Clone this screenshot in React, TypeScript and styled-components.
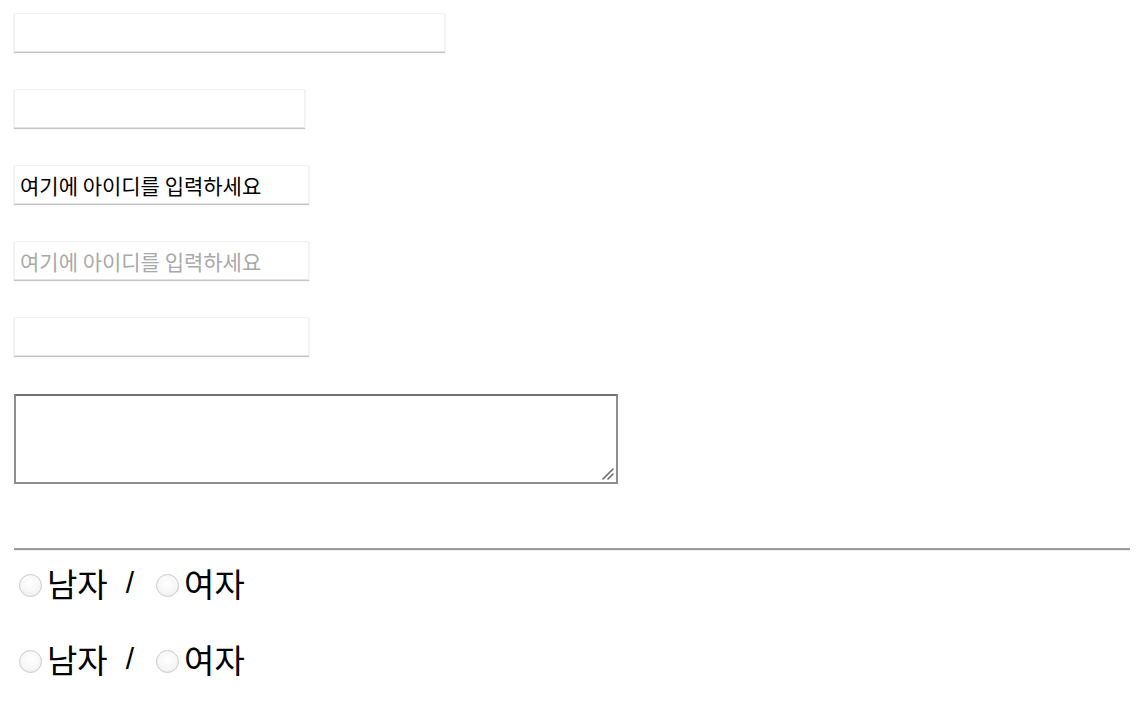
import styled, { createGlobalStyle } from 'styled-components';

const GlobalStyle = createGlobalStyle`
  body {
    margin: 0;
    background: #ffffff;
    font-family: "Liberation Serif", "Noto Sans CJK KR", serif;
  }
`;

function App() {
  return (
    <>
      <GlobalStyle />
      <Page>
        <TextField type='text' width={431} gapAfter={37} />
        <TextField type='password' width={291} gapAfter={37} />
        <TextField type='text' width={295} gapAfter={37} defaultValue='여기에 아이디를 입력하세요' />
        <TextField type='text' width={295} gapAfter={37} placeholder='여기에 아이디를 입력하세요' />
        <TextField type='email' width={295} gapAfter={38} />
        <MemoWrap>
          <Memo />
          <Grip width='12' height='12' viewBox='0 0 12 12'>
            <path d='M1 11 L11 1 M6 11 L11 6' stroke='#6b6b6b' strokeWidth='1.6' strokeLinecap='round' />
          </Grip>
        </MemoWrap>
        <Divider />
        <GenderRow>
          <Radio type='radio' name='gender1' />
          <Label>남자</Label>
          <Slash>/</Slash>
          <Radio type='radio' name='gender1' />
          <Label>여자</Label>
        </GenderRow>
        <GenderRow>
          <Radio type='radio' name='gender2' />
          <Label>남자</Label>
          <Slash>/</Slash>
          <Radio type='radio' name='gender2' />
          <Label>여자</Label>
        </GenderRow>
      </Page>
    </>
  );
}

const Page = styled.div`
  display: flex;
  flex-direction: column;
  align-items: flex-start;
  padding: 13px 10px 20px 14px;
`;

const TextField = styled.input<{ width: number; gapAfter: number }>`
  box-sizing: border-box;
  width: ${(p) => p.width}px;
  height: 39px;
  margin: 0 0 ${(p) => p.gapAfter}px;
  padding: 0 5px;
  border: 1px solid #f1f1f1;
  border-bottom-color: #e2e2e2;
  box-shadow: 0 1px 1px rgba(0, 0, 0, 0.22);
  background: #ffffff;
  outline: none;
  font-family: "Noto Sans CJK KR", "Noto Sans", sans-serif;
  font-size: 21px;
  font-weight: 400;
  color: #000000;

  &::placeholder {
    color: #a9a9a9;
  }
`;

const MemoWrap = styled.div`
  position: relative;
  display: flex;
`;

const Memo = styled.textarea`
  box-sizing: border-box;
  width: 604px;
  height: 90px;
  margin: 0;
  padding: 2px;
  border: 2px solid #8f8f8f;
  border-top-color: #717171;
  background: #ffffff;
  outline: none;
  resize: none;
`;

const Grip = styled.svg`
  position: absolute;
  right: 4px;
  bottom: 4px;
  pointer-events: none;
`;

const Divider = styled.hr`
  align-self: stretch;
  margin: 64px 0 0;
  height: 0;
  border: none;
  border-top: 2px solid #9b9b9b;
  border-bottom: 1px solid #efefef;
`;

const GenderRow = styled.div`
  display: flex;
  align-items: center;
  height: 40px;
  margin-top: 12px;
  & + & {
    margin-top: 36px;
  }
`;

const Radio = styled.input`
  appearance: none;
  box-sizing: border-box;
  width: 23px;
  height: 23px;
  margin: 5px 5px 0 5px;
  border: 1px solid #cbcbcb;
  border-radius: 50%;
  background: radial-gradient(circle at 50% 40%, #ffffff 0%, #f7f7f7 55%, #e6e6e6 100%);
`;

const Label = styled.span`
  font-family: "Noto Sans CJK KR", sans-serif;
  font-size: 33px;
  font-weight: 400;
  line-height: 40px;
  color: #000000;
`;

const Slash = styled.span`
  font-family: "Liberation Sans", sans-serif;
  font-size: 30px;
  line-height: 40px;
  margin: 0 17px 0 18px;
  color: #000000;
`;

export default App;
